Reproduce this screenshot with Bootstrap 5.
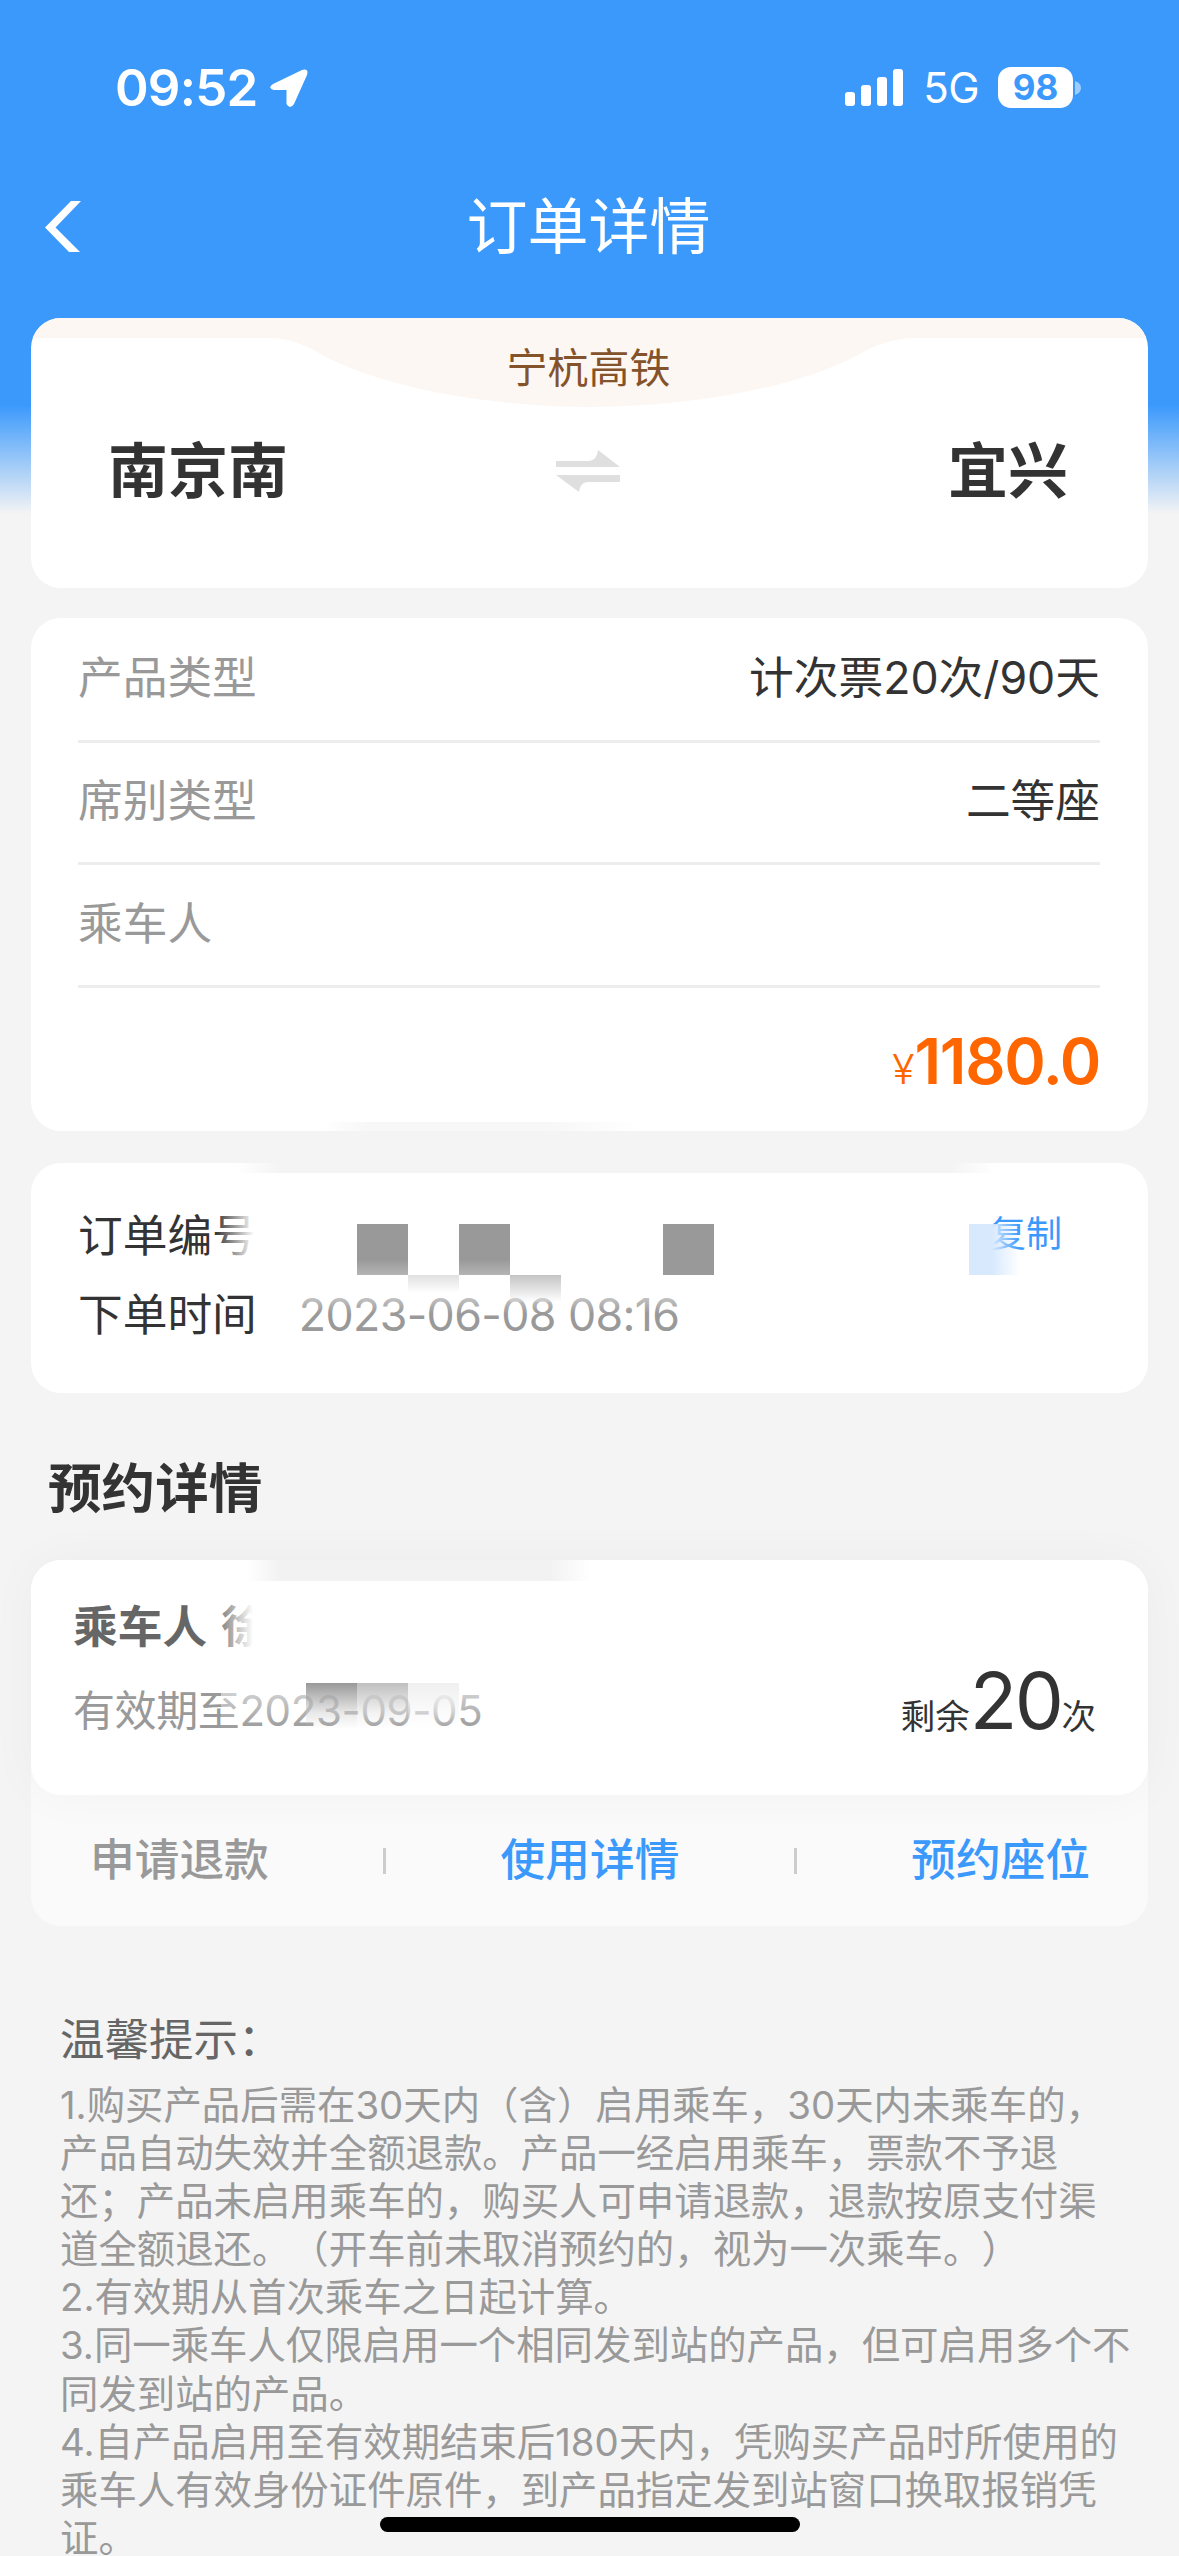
<!DOCTYPE html>
<html lang="zh-CN">
<head>
<meta charset="utf-8">
<meta name="viewport" content="width=device-width, initial-scale=1">
<title>订单详情</title>
<link href="https://cdn.jsdelivr.net/npm/bootstrap@5.3.0/dist/css/bootstrap.min.css" rel="stylesheet">
<style>
  :root { --brand: #3b99fc; --ink: #333; --mute: #999; --page: #f4f4f4; }
  html, body { height: 2556px; overflow: hidden; }
  body { background: var(--page); color: var(--ink); font-family: Inter, "Noto Sans CJK SC", sans-serif; font-size: 44.7px; line-height: 1; text-spacing-trim: space-all; }
  .screen { width: 1179px; height: 2556px; overflow: hidden; background: linear-gradient(var(--brand) 405px, var(--page) 514px); }
  .status { height: 176px; padding: 60px 98px 0 115px; }
  .clock { font-size: 51px; font-weight: 600; line-height: 56px; letter-spacing: -.8px; }
  .arrow { margin: 8px 0 0 12px; }
  .net { font-size: 42px; line-height: 56px; margin: 0 19px 0 19px; letter-spacing: -.5px; }
  .batt { width: 75px; height: 41px; margin-top: 7px; border-radius: 13px; background: #fff; color: var(--brand); font-size: 35px; font-weight: 700; line-height: 41px; }
  .title-bar { height: 142px; padding: 0 44px; }
  .title-bar h1 { font-size: 61px; line-height: 102px; margin: 0; font-weight: 400; position: relative; left: -1px; }
  .back { width: 36px; height: 51px; top: 25px; left: 45px; }
  .panel { margin: 0 31px; border-radius: 30px; background: #fff; border: 0; }
  .route { height: 270px; overflow: hidden; }
  .bowl { top: 0; left: 0; }
  .line-name { font-size: 41px; line-height: 50px; padding: 25px 2px 0 0; color: #85532b; }
  .stations { padding: 47px 80px 0 77px; font-size: 60px; font-weight: 700; line-height: 62px; }
  .swap { margin-right: 60px; }
  .facts { height: 513px; margin-top: 30px; padding: 2px 48px 0 47px; }
  .fact { height: 122.7px; border-bottom: 3px solid #ededed; padding-bottom: 2px; }
  .price { height: 143px; color: #ff6600; padding-top: 35px; }
  .price b { font-size: 63px; font-weight: 600; line-height: 76px; letter-spacing: -1.3px; }
  .price span { font-size: 41px; font-weight: 300; }
  .order { height: 230px; margin-top: 32px; padding: 34px 48px 0 47px; }
  .order-row { height: 79px; }
  .order-row .date { color: var(--mute); margin-left: 42px; letter-spacing: -.6px; }
  .copy { font-size: 36px; color: var(--brand); margin-right: 38px; padding-bottom: 6px; }
  .px { position: absolute; width: 51px; height: 51px; background: #999; }
  .veil { position: absolute; }
  .sec-title { height: 167px; padding: 69px 0 0 48px; font-size: 53.6px; line-height: 54px; font-weight: 700; margin: 0; }
  .wrapper { margin: 0 31px; height: 366px; border-radius: 30px; background: #fafafa; }
  .ticket { height: 235px; border-radius: 30px; background: #fff; box-shadow: 0 0 50px rgba(0,0,0,.035); padding: 0 52px 0 42px; }
  .rider { font-weight: 600; color: #666; line-height: 50px; padding-top: 42px; word-spacing: 3px; }
  .valid { font-size: 42px; color: var(--mute); line-height: 50px; margin-top: 34px; letter-spacing: -.4px; }
  .left-n { font-size: 34.5px; line-height: 80px; margin-top: 101px; }
  .left-n b { font-size: 78px; font-weight: 400; letter-spacing: -2.5px; }
  .actions { height: 131px; padding: 0 58px 0 59px; font-weight: 500; color: var(--brand); }
  .actions i { width: 3px; height: 26px; background: #ccc; }
  .tips { padding: 86px 0 0 60px; color: var(--mute); font-size: 38.4px; line-height: 48.1px; }
  .tips h2 { font-size: 44.5px; line-height: 56px; color: #666; font-weight: 400; margin: 0 0 13px; }
  .home { width: 420px; height: 15px; border-radius: 8px; background: #000; left: 380px; top: 2517px; }
  .k { color: var(--mute); }
  .smear-a { left: 290px; bottom: 0; width: 320px; height: 9px; background: linear-gradient(90deg, transparent, #f7f7f7 15%, #f7f7f7 70%, transparent); }
  .smear-b { left: 205px; top: 0; width: 760px; height: 10px; background: linear-gradient(90deg, transparent, var(--page) 6%, var(--page) 94%, transparent); }
  .smear-c { left: 215px; top: 0; width: 345px; height: 21px; background: linear-gradient(90deg, transparent, #f2f2f2 10%, #f2f2f2 88%, transparent); }
  .fade-no { left: 184px; top: 45px; width: 46px; height: 60px; background: linear-gradient(90deg, transparent, #fff 85%); }
  .fade-date { left: 262px; top: 122px; width: 400px; height: 44px; background: linear-gradient(rgba(255,255,255,.75), transparent 65%); }
  .fade-name { left: 182px; top: 38px; width: 73px; height: 60px; background: linear-gradient(90deg, transparent, #fff 55%); }
  .fade-valid { left: 190px; top: 125px; width: 270px; height: 50px; background: linear-gradient(rgba(255,255,255,.65), transparent 90%); }
  .p1 { left: 326px; top: 61px; background: linear-gradient(#999 70%, #b5b5b5); }
  .p2 { left: 428px; top: 61px; background: linear-gradient(#999 70%, #b5b5b5); }
  .p3 { left: 632px; top: 61px; }
  .p4 { left: 377px; top: 112px; height: 18px; background: linear-gradient(#e0e0e0, #fff); }
  .p5 { left: 479px; top: 112px; height: 27px; background: linear-gradient(#c4c4c4, rgba(255,255,255,.2)); }
  .p6 { left: 938px; top: 61px; background: linear-gradient(90deg, #d8e9fe 45%, rgba(255,255,255,0)); }
  .q1 { left: 275px; top: 123px; height: 46px; background: linear-gradient(#999, rgba(200,200,200,.4) 65%, transparent); }
  .q2 { left: 326px; top: 123px; height: 46px; background: linear-gradient(#bfbfbf, rgba(225,225,225,.4) 65%, transparent); }
  .q3 { left: 377px; top: 123px; height: 46px; background: linear-gradient(#f0f0f0, rgba(245,245,245,.5) 60%, transparent); }
</style>
</head>
<body>
<main class="screen position-relative">
  <header class="text-white">
    <div class="status d-flex align-items-start justify-content-between">
      <div class="d-flex align-items-start">
        <span class="clock">09:52</span>
        <svg class="arrow" width="42" height="42" viewBox="0 0 42 42"><path d="M4 16 33 2Q40 0 38 7L25 36Q21 42 17.500 36V22H5Q-2 20 4 16Z" fill="#fff"/></svg>
      </div>
      <div class="d-flex align-items-start">
        <svg width="60" height="56" viewBox="0 0 60 56" fill="#fff"><rect x="1" y="32" width="10" height="14" rx="3"/><rect x="17" y="25" width="10" height="21" rx="3"/><rect x="33" y="17" width="10" height="29" rx="3"/><rect x="49" y="9" width="10" height="37" rx="3"/></svg>
        <span class="net">5G</span>
        <span class="batt text-center">98</span>
        <svg width="8" height="56" viewBox="0 0 8 56"><path d="M2 21Q8 23 8 28T2 35Z" fill="#fff" opacity=".5"/></svg>
      </div>
    </div>
    <div class="title-bar position-relative text-center">
      <svg class="back position-absolute" viewBox="0 0 36 51"><path d="M26 0H36L10.500 26.500 35 51H24L0 26.500Z" fill="#fff"/></svg>
      <h1>订单详情</h1>
    </div>
  </header>

  <section class="panel route position-relative">
    <svg class="bowl position-absolute" width="1117" height="90" viewBox="0 0 1117 90"><path d="M0 0H1117V20H885Q855 20 825 38C760 72 650 89 559 89S358 72 293 38Q264 20 240 20H0Z" fill="#fdf7f3"/></svg>
    <div class="line-name position-relative text-center">宁杭高铁</div>
    <div class="stations d-flex justify-content-between align-items-center">
      <span>南京南</span>
      <svg class="swap" width="66" height="44" viewBox="0 0 66 44" fill="#dfdfdf"><path d="M1 12H34Q42 11 43 1L65 18H1ZM1 26H65V33H32Q25 34 24 43Z"/></svg>
      <span>宜兴</span>
    </div>
  </section>

  <section class="panel facts position-relative">
    <div class="fact d-flex justify-content-between align-items-center"><span class="k">产品类型</span><span>计次票20次/90天</span></div>
    <div class="fact d-flex justify-content-between align-items-center"><span class="k">席别类型</span><span>二等座</span></div>
    <div class="fact d-flex align-items-center"><span class="k">乘车人</span></div>
    <div class="price d-flex justify-content-end align-items-baseline"><span>¥</span><b>1180.0</b></div>
    <div class="veil smear-a"></div>
  </section>

  <section class="panel order position-relative">
    <div class="veil smear-b"></div>
    <div class="order-row d-flex justify-content-between align-items-center"><span>订单编号</span><span class="copy">复制</span></div>
    <div class="order-row d-flex align-items-center"><span>下单时间</span><span class="date">2023-06-08 08:16</span></div>
    <div class="veil fade-no"></div>
    <div class="veil fade-date"></div>
    <div class="px p1"></div><div class="px p2"></div><div class="px p3"></div>
    <div class="px p4"></div><div class="px p5"></div><div class="px p6"></div>
  </section>

  <h2 class="sec-title">预约详情</h2>

  <section class="wrapper">
    <div class="ticket position-relative d-flex justify-content-between">
      <div>
        <div class="rider">乘车人 徐</div>
        <div class="valid">有效期至2023-09-05</div>
      </div>
      <div class="left-n">剩余<b>20</b>次</div>
      <div class="veil smear-c"></div>
      <div class="veil fade-name"></div>
      <div class="veil fade-valid"></div>
      <div class="px q1"></div><div class="px q2"></div><div class="px q3"></div>
    </div>
    <div class="actions d-flex justify-content-between align-items-center">
      <span class="k">申请退款</span><i></i><span>使用详情</span><i></i><span>预约座位</span>
    </div>
  </section>

  <section class="tips text-nowrap">
    <h2>温馨提示：</h2>
    1.购买产品后需在30天内（含）启用乘车，30天内未乘车的，<br>
    产品自动失效并全额退款。产品一经启用乘车，票款不予退<br>
    还；产品未启用乘车的，购买人可申请退款，退款按原支付渠<br>
    道全额退还。（开车前未取消预约的，视为一次乘车。）<br>
    2.有效期从首次乘车之日起计算。<br>
    3.同一乘车人仅限启用一个相同发到站的产品，但可启用多个不<br>
    同发到站的产品。<br>
    4.自产品启用至有效期结束后180天内，凭购买产品时所使用的<br>
    乘车人有效身份证件原件，到产品指定发到站窗口换取报销凭<br>
    证。
  </section>
  <div class="home position-absolute"></div>
</main>
<script src="https://cdn.jsdelivr.net/npm/bootstrap@5.3.0/dist/js/bootstrap.bundle.min.js"></script>
</body>
</html>
